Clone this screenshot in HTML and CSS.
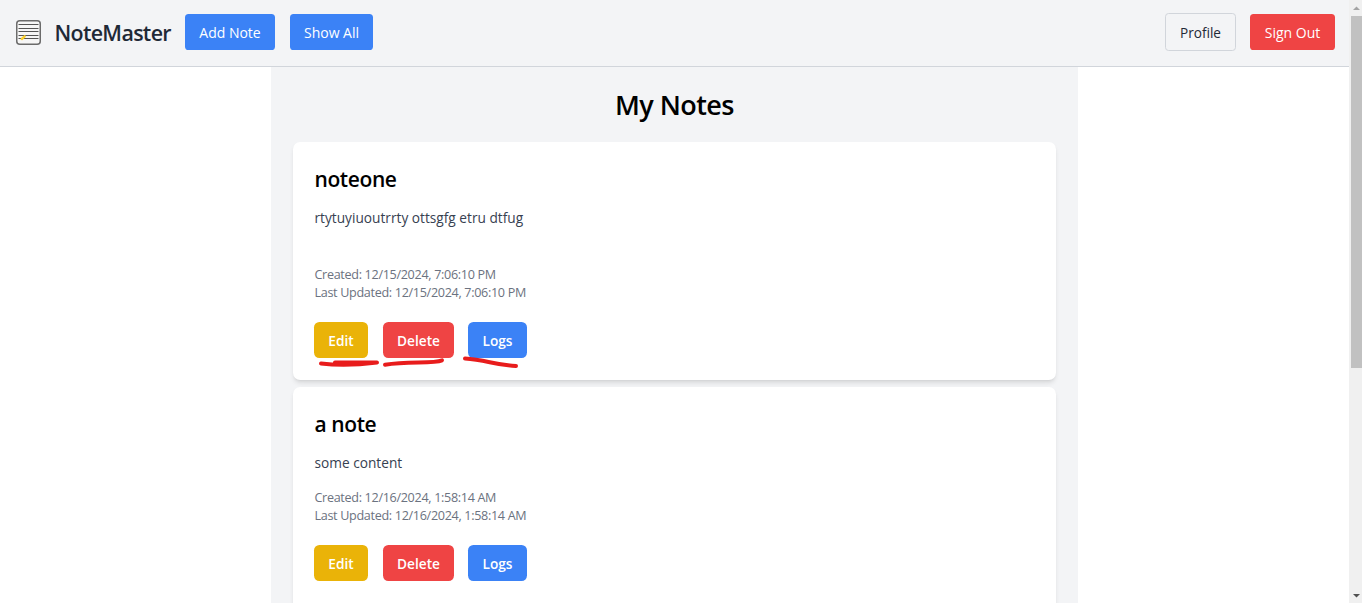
FILE: index.html
```html
<!DOCTYPE html>
<html lang="en">
<head>
<meta charset="utf-8">
<title>NoteMaster</title>
<link rel="stylesheet" href="styles.css">
</head>
<body>
<div class="app">
  <div class="page">
    <header class="navbar">
      <svg class="logo" viewBox="0 0 26 26" width="26" height="26">
        <rect x="0.750" y="0.750" width="23.500" height="23.500" rx="3" fill="#f6f6f6" stroke="#6b6b6b" stroke-width="1.5"/>
        <path d="M2.500 4.500h20M2.500 8.500h20M2.500 11.500h20M2.500 15.500h20M2.500 18.500h20" stroke="#555" stroke-width="1.1"/>
        <path d="M5.800 19l2.900-2.700" stroke="#fbd02d" stroke-width="2.4" stroke-linecap="round"/>
      </svg>
      <span class="brand">NoteMaster</span>
      <button class="nav-btn blue add">Add Note</button>
      <button class="nav-btn blue show">Show All</button>
      <span class="spacer"></span>
      <button class="nav-btn outline">Profile</button>
      <button class="nav-btn red signout">Sign Out</button>
    </header>
    <main class="notes">
      <h1 class="title">My Notes</h1>
      <article class="card">
        <h2 class="name">noteone</h2>
        <p class="content content-one">rtytuyiuoutrrty ottsgfg etru dtfug</p>
        <div class="meta"><p>Created: 12/15/2024, 7:06:10 PM</p><p>Last Updated: 12/15/2024, 7:06:10 PM</p></div>
        <div class="actions">
          <button class="btn yellow">Edit</button>
          <button class="btn red delete">Delete</button>
          <button class="btn blue logs">Logs</button>
        </div>
        <svg class="marks" viewBox="0 0 210 16" width="210" height="16" fill="none" stroke="#e81c1c" stroke-width="4" stroke-linecap="round" stroke-linejoin="round">
          <path d="M7 8.500C23 10.500 44 10 63 7.500L21 7.500"/>
          <path d="M71 9.700C95 6 119 9 128 5.300"/>
          <path d="M151 3.500C171 4.500 181 10 202 11"/>
        </svg>
      </article>
      <article class="card">
        <h2 class="name">a note</h2>
        <p class="content">some content</p>
        <div class="meta"><p>Created: 12/16/2024, 1:58:14 AM</p><p>Last Updated: 12/16/2024, 1:58:14 AM</p></div>
        <div class="actions">
          <button class="btn yellow">Edit</button>
          <button class="btn red delete">Delete</button>
          <button class="btn blue logs">Logs</button>
        </div>
      </article>
    </main>
  </div>
  <div class="scrollbar">
    <svg class="arrow" width="13" height="16" viewBox="0 0 13 16"><path d="M4 10h7L7.500 6.500z" fill="#a3a3a3"/></svg>
    <div class="thumb"></div>
    <svg class="arrow" width="13" height="16" viewBox="0 0 13 16"><path d="M4 7h7L7.500 10.500z" fill="#505050"/></svg>
  </div>
</div>
</body>
</html>
```
FILE: styles.css
```css
* { box-sizing: border-box; margin: 0; padding: 0; }
body { font-family: "Open Sans", "Noto Sans", sans-serif; background: #fff; overflow: hidden; }
button { font-family: inherit; border: 0; white-space: nowrap; }
.app { display: flex; height: 603px; overflow: hidden; }
.page { width: 1349px; flex: none; }
.navbar { display: flex; align-items: center; height: 67px; padding: 0 14px 2px 16px; background: #f3f4f6; border-bottom: 1px solid #d1d5db; }
.logo { flex: none; margin-top: 2px; }
.brand { width: 130px; padding: 2px 0 0 12.5px; font-size: 21.4px; line-height: 30px; font-weight: 540; letter-spacing: -0.68px; color: #1f2937; white-space: nowrap; }
.spacer { flex: 1; }
.nav-btn { height: 36px; border-radius: 3.6px; color: #fff; font-size: 14px; }
.blue { background: #3b82f6; }
.red { background: #ef4444; }
.yellow { background: #eab308; }
.add { width: 90px; margin-left: 13px; }
.show { width: 83px; margin-left: 15px; }
.outline { width: 71px; height: 38px; margin-right: 14px; border: 1px solid #d1d5db; background: transparent; color: #1f2937; font-size: 13.6px; }
.signout { width: 85px; }
.notes { width: 807px; height: 536px; margin-left: 271px; padding: 22px 22px 0; background: #f3f4f6; overflow: hidden; }
.title { height: 32px; margin-bottom: 21px; font-size: 27px; line-height: 32px; font-weight: 540; letter-spacing: -0.55px; text-align: center; }
.card { position: relative; width: 763px; height: 238px; margin-bottom: 7px; padding: 22px 21px; border-radius: 7.2px; background: #fff; box-shadow: 0 3.6px 5.4px -1px rgba(0,0,0,.1), 0 1.8px 3.6px -2px rgba(0,0,0,.1); }
.name { height: 32px; margin-bottom: 7px; padding-left: 0.5px; font-size: 21px; line-height: 31px; font-weight: 550; letter-spacing: -0.4px; }
.content { height: 30px; margin-bottom: 11px; padding-left: 0.5px; font-size: 13.7px; line-height: 30px; color: #374151; }
.content-one { margin-bottom: 33px; }
.meta { height: 36px; margin-bottom: 20px; padding-left: 0.5px; font-size: 12.6px; line-height: 18px; letter-spacing: -0.32px; color: #6b7280; }
.actions { display: flex; }
.btn { width: 54px; height: 36px; border-radius: 5.4px; color: #fff; font-size: 13.7px; font-weight: 600; }
.delete { width: 71px; margin-left: 15px; }
.logs { width: 59px; margin-left: 14px; }
.marks { position: absolute; left: 21px; top: 213px; }
.scrollbar { display: flex; flex-direction: column; justify-content: space-between; width: 13px; background: #f0f0f0; }
.thumb { height: 352px; margin: 0 0 auto 2px; background: #c1c1c1; }
```
